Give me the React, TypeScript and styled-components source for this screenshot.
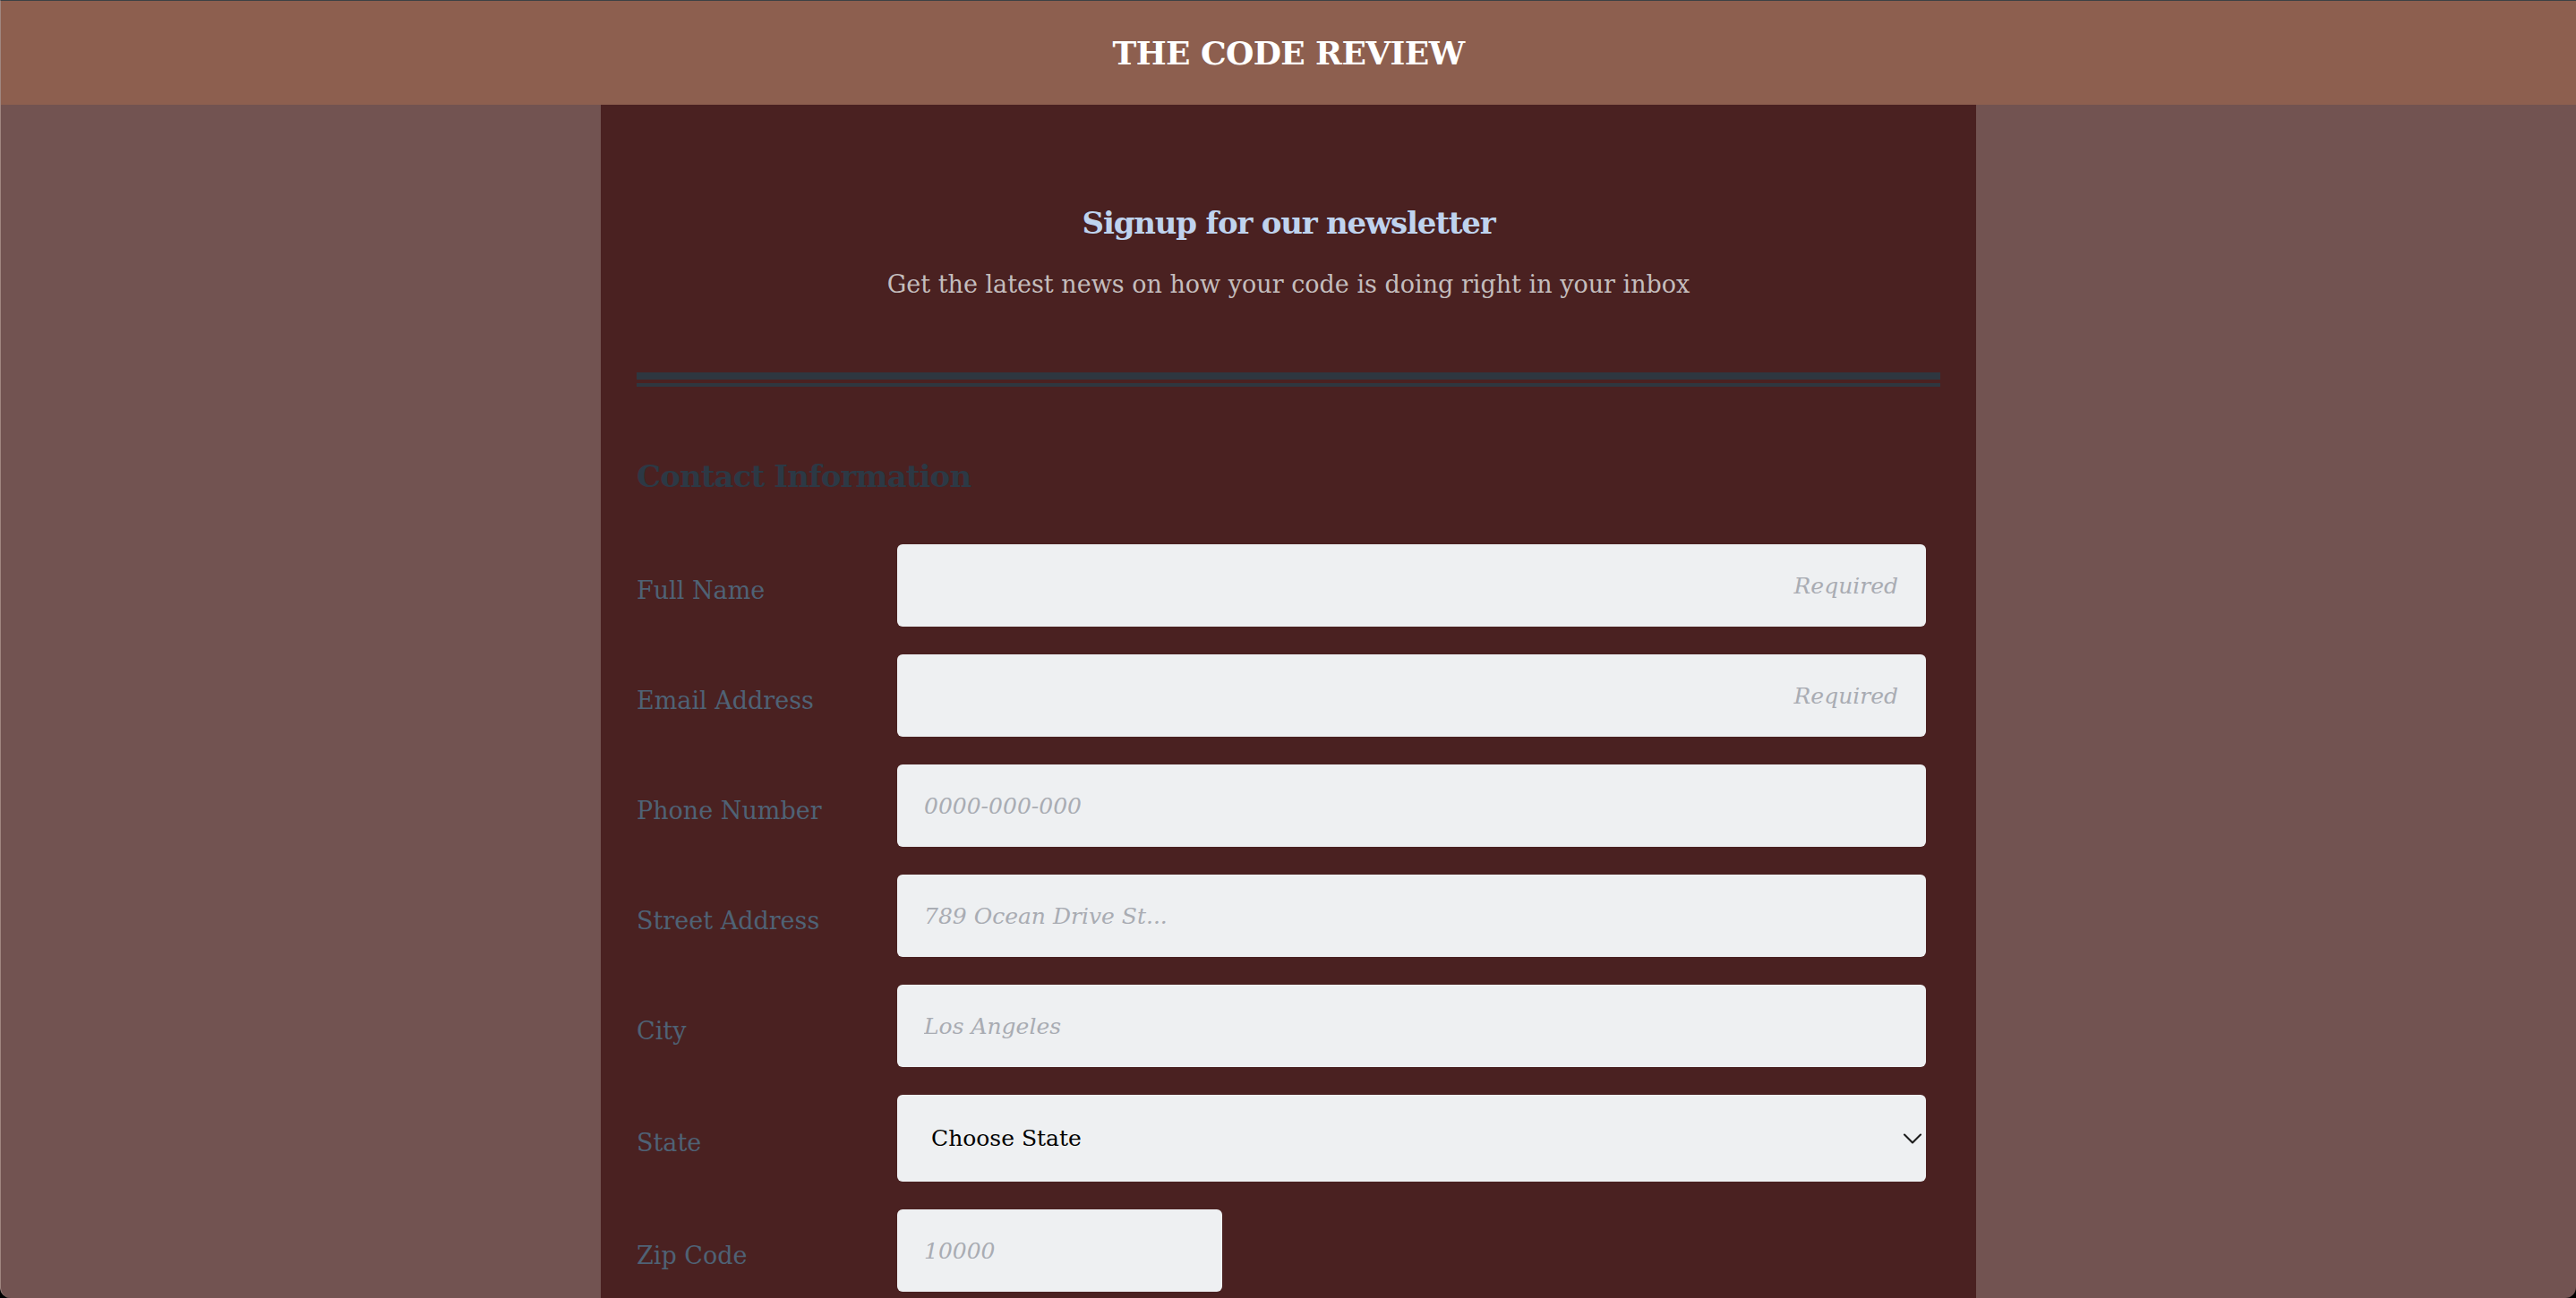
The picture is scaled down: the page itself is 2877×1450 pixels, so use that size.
import styled, { createGlobalStyle } from 'styled-components';
import { ChevronDown } from 'lucide-react';

const GlobalStyle = createGlobalStyle`
	html,
	body {
		margin: 0;
		padding: 0;
		background: #000;
	}

	* {
		box-sizing: border-box;
	}
`;

const fontStack = `'DejaVu Serif', 'Liberation Serif', serif`;

const Frame = styled.div`
	height: 100vh;
	overflow: hidden;
	display: flex;
	flex-direction: column;
	background-color: #725351;
	border-top: 1px solid #3c4145;
	border-left: 1px solid #a08680;
	border-radius: 0 0 12px 12px;
	font-family: ${fontStack};
`;

const Header = styled.header`
	flex: 0 0 116px;
	display: flex;
	align-items: center;
	justify-content: center;
	background-color: #8d5f4f;
`;

const Title = styled.h1`
	margin: 0;
	color: #fff;
	font-size: 36px;
	font-weight: 700;
	letter-spacing: -0.6px;
`;

const Panel = styled.main`
	flex: 1;
	width: 1536px;
	margin: 0 auto;
	padding: 0 40px;
	background-color: #4a2121;
`;

const Intro = styled.section`
	text-align: center;
	padding-top: 106px;
`;

const Heading = styled.h2`
	margin: 0;
	color: #bfd3ee;
	font-size: 34px;
	font-weight: 700;
	letter-spacing: -1.2px;
	line-height: 52px;
`;

const Subtitle = styled.p`
	margin: 23px 0 0;
	color: #c4bdbd;
	font-size: 27px;
	line-height: 40px;
`;

const Divider = styled.hr`
	height: 4px;
	margin: 78px 0 0;
	border: none;
	border-top: 8px solid #2e3740;
	border-bottom: 4px solid #2e3740;
	box-sizing: content-box;
`;

const SectionTitle = styled.h3`
	margin: 74px 0 0;
	color: #2c3945;
	font-size: 34px;
	font-weight: 700;
	letter-spacing: -0.9px;
	line-height: 52px;
`;

const Form = styled.form`
	display: grid;
	grid-template-columns: 291px 1149px;
	row-gap: 31px;
	margin-top: 50px;
`;

const Label = styled.label`
	display: flex;
	align-items: center;
	padding-top: 10px;
	color: #4f6275;
	font-size: 27px;
`;

const Field = styled.input<{ $alignRight?: boolean; $narrow?: boolean }>`
	width: ${p => (p.$narrow ? '363px' : '100%')};
	height: 92px;
	padding: 0 31px 0 30px;
	border: none;
	border-radius: 6px;
	background-color: #eef0f2;
	font-family: ${fontStack};
	font-size: 25px;
	color: #222;
	text-align: ${p => (p.$alignRight ? 'right' : 'left')};
	outline: none;

	&::placeholder {
		color: #a9acb3;
		font-style: italic;
	}
`;

const SelectWrap = styled.div`
	position: relative;
	height: 97px;
`;

const Select = styled.select`
	width: 100%;
	height: 100%;
	padding: 0 60px 0 38px;
	border: none;
	border-radius: 6px;
	background-color: #eef0f2;
	appearance: none;
	font-family: ${fontStack};
	font-size: 25px;
	color: #000;
	outline: none;
`;

const Chevron = styled.span`
	position: absolute;
	top: 50%;
	right: -3px;
	transform: translateY(-50%);
	display: flex;
	color: #1c1c1c;
	pointer-events: none;
`;

const fields = [
	{ id: 'name', label: 'Full Name', placeholder: 'Required', right: true },
	{ id: 'email', label: 'Email Address', placeholder: 'Required', right: true },
	{ id: 'phone', label: 'Phone Number', placeholder: '0000-000-000' },
	{ id: 'street', label: 'Street Address', placeholder: '789 Ocean Drive St...' },
	{ id: 'city', label: 'City', placeholder: 'Los Angeles' },
];

export default function App() {
	return (
		<>
			<GlobalStyle />
			<Frame>
				<Header>
					<Title>THE CODE REVIEW</Title>
				</Header>
				<Panel>
					<Intro>
						<Heading>Signup for our newsletter</Heading>
						<Subtitle>Get the latest news on how your code is doing right in your inbox</Subtitle>
					</Intro>
					<Divider />
					<SectionTitle>Contact Information</SectionTitle>
					<Form>
						{fields.map(field => (
							<FieldRow key={field.id} {...field} />
						))}
						<Label htmlFor="state">State</Label>
						<SelectWrap>
							<Select id="state" defaultValue="">
								<option value="">Choose State</option>
								<option value="CA">California</option>
								<option value="NY">New York</option>
							</Select>
							<Chevron>
								<ChevronDown size={36} strokeWidth={1.4} />
							</Chevron>
						</SelectWrap>
						<Label htmlFor="zip">Zip Code</Label>
						<Field id="zip" placeholder="10000" $narrow />
					</Form>
				</Panel>
			</Frame>
		</>
	);
}

const FieldRow = ({
	id,
	label,
	placeholder,
	right,
}: {
	id: string;
	label: string;
	placeholder: string;
	right?: boolean;
}) => {
	return (
		<>
			<Label htmlFor={id}>{label}</Label>
			<Field id={id} placeholder={placeholder} $alignRight={right} />
		</>
	);
};
